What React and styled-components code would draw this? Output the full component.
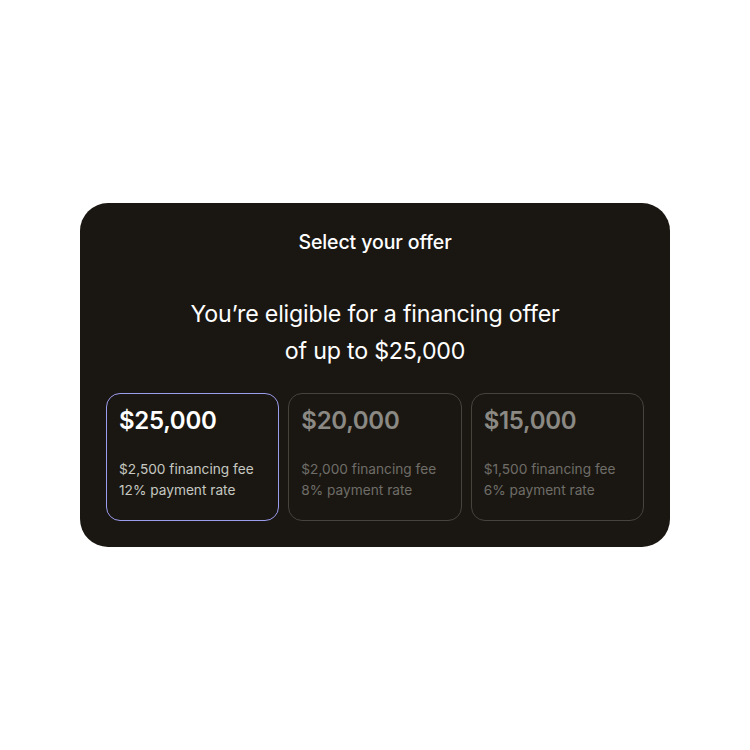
import styled, { createGlobalStyle } from 'styled-components';

const GlobalStyle = createGlobalStyle`
  body {
    margin: 0;
    background: #ffffff;
    font-family: Inter, "Liberation Sans", sans-serif;
  }
`;

const Page = styled.div`
  width: 750px;
  height: 750px;
  display: flex;
  justify-content: center;
  padding-top: 203px;
  box-sizing: border-box;
`;

const Panel = styled.section`
  width: 590px;
  height: 344px;
  box-sizing: border-box;
  background: #1a1712;
  border-radius: 28px;
  padding: 28px 26px 26px;
  display: flex;
  flex-direction: column;
  align-items: center;
`;

const Title = styled.h1`
  margin: 0;
  font-size: 19.5px;
  line-height: 22px;
  font-weight: 500;
  color: #ffffff;
  letter-spacing: -0.1px;
`;

const Heading = styled.p`
  margin: 43px 0 0;
  font-size: 23.2px;
  line-height: 37px;
  font-weight: 400;
  color: #ffffff;
  text-align: center;
  letter-spacing: -0.2px;
`;

const Offers = styled.div`
  margin-top: 23px;
  width: 100%;
  display: grid;
  grid-template-columns: repeat(3, 1fr);
  gap: 9px;
`;

const Card = styled.button`
  all: unset;
  box-sizing: border-box;
  height: 128px;
  border-radius: 14px;
  border: 1.5px solid ${({ $selected }) => ($selected ? '#9b9cee' : '#46433d')};
  padding: 12px 12px 0;
  display: flex;
  flex-direction: column;
  cursor: pointer;
`;

const Amount = styled.div`
  font-size: 24px;
  line-height: 30px;
  font-weight: 600;
  color: ${({ $selected }) => ($selected ? '#ffffff' : '#8b8984')};
  letter-spacing: -0.3px;
`;

const Details = styled.div`
  margin-top: 23px;
  font-size: 13.7px;
  line-height: 21px;
  color: ${({ $selected }) => ($selected ? '#c6c8c1' : '#6f6d68')};
`;

const offers = [
  { amount: '$25,000', fee: '$2,500', rate: '12%', selected: true },
  { amount: '$20,000', fee: '$2,000', rate: '8%' },
  { amount: '$15,000', fee: '$1,500', rate: '6%' },
];

export default function App() {
  return (
    <>
      <GlobalStyle />
      <Page>
        <Panel>
          <Title>Select your offer</Title>
          <Heading>
            You’re eligible for a financing offer
            <br />
            of up to $25,000
          </Heading>
          <Offers>
            {offers.map((o) => (
              <Card key={o.amount} $selected={o.selected}>
                <Amount $selected={o.selected}>{o.amount}</Amount>
                <Details $selected={o.selected}>
                  {o.fee} financing fee
                  <br />
                  {o.rate} payment rate
                </Details>
              </Card>
            ))}
          </Offers>
        </Panel>
      </Page>
    </>
  );
}
